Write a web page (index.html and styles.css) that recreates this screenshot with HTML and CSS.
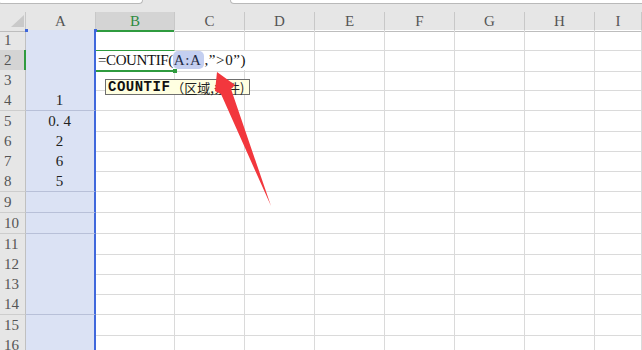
FILE: index.html
```html
<!DOCTYPE html>
<html>
<head>
<meta charset="utf-8">
<link rel="stylesheet" href="styles.css">
</head>
<body>
<div class="page">
  <div class="top">
    <div class="fbox fbox-name"></div>
    <div class="fbox fbox-formula"></div>
  </div>
  <div class="sheet">
    <div class="row hrow">
      <div class="corner"><span class="tri"></span></div>
      <div class="ch">A</div><div class="ch ch-sel">B</div><div class="ch">C</div><div class="ch">D</div><div class="ch">E</div><div class="ch">F</div><div class="ch">G</div><div class="ch">H</div><div class="ch">I</div>
    </div>
    <div class="row"><div class="rh">1</div><div class="c ca"></div><div class="c cb1"></div><div class="c"></div><div class="c"></div><div class="c"></div><div class="c"></div><div class="c"></div><div class="c"></div><div class="c"></div></div>
    <div class="row"><div class="rh rh-sel">2</div><div class="c ca"></div><div class="c cb2 nor"><span class="formula">=COUNTIF(<span class="hl">A:A</span><span class="tail">,”&gt;0”)</span></span></div><div class="c nor"></div><div class="c"></div><div class="c"></div><div class="c"></div><div class="c"></div><div class="c"></div><div class="c"></div></div>
    <div class="row"><div class="rh">3</div><div class="c ca"></div><div class="c"></div><div class="c"></div><div class="c"></div><div class="c"></div><div class="c"></div><div class="c"></div><div class="c"></div><div class="c"></div></div>
    <div class="row tall"><div class="rh">4</div><div class="c ca">1</div><div class="c"></div><div class="c"></div><div class="c"></div><div class="c"></div><div class="c"></div><div class="c"></div><div class="c"></div><div class="c"></div></div>
    <div class="row"><div class="rh">5</div><div class="c ca">0.<span class="gap"></span>4</div><div class="c"></div><div class="c"></div><div class="c"></div><div class="c"></div><div class="c"></div><div class="c"></div><div class="c"></div><div class="c"></div></div>
    <div class="row"><div class="rh">6</div><div class="c ca">2</div><div class="c"></div><div class="c"></div><div class="c"></div><div class="c"></div><div class="c"></div><div class="c"></div><div class="c"></div><div class="c"></div></div>
    <div class="row"><div class="rh">7</div><div class="c ca">6</div><div class="c"></div><div class="c"></div><div class="c"></div><div class="c"></div><div class="c"></div><div class="c"></div><div class="c"></div><div class="c"></div></div>
    <div class="row tall"><div class="rh">8</div><div class="c ca">5</div><div class="c"></div><div class="c"></div><div class="c"></div><div class="c"></div><div class="c"></div><div class="c"></div><div class="c"></div><div class="c"></div></div>
    <div class="row tall"><div class="rh">9</div><div class="c ca"></div><div class="c"></div><div class="c"></div><div class="c"></div><div class="c"></div><div class="c"></div><div class="c"></div><div class="c"></div><div class="c"></div></div>
    <div class="row tall"><div class="rh">10</div><div class="c ca"></div><div class="c"></div><div class="c"></div><div class="c"></div><div class="c"></div><div class="c"></div><div class="c"></div><div class="c"></div><div class="c"></div></div>
    <div class="row"><div class="rh">11</div><div class="c ca"></div><div class="c"></div><div class="c"></div><div class="c"></div><div class="c"></div><div class="c"></div><div class="c"></div><div class="c"></div><div class="c"></div></div>
    <div class="row"><div class="rh">12</div><div class="c ca"></div><div class="c"></div><div class="c"></div><div class="c"></div><div class="c"></div><div class="c"></div><div class="c"></div><div class="c"></div><div class="c"></div></div>
    <div class="row"><div class="rh">13</div><div class="c ca"></div><div class="c"></div><div class="c"></div><div class="c"></div><div class="c"></div><div class="c"></div><div class="c"></div><div class="c"></div><div class="c"></div></div>
    <div class="row tall"><div class="rh">14</div><div class="c ca"></div><div class="c"></div><div class="c"></div><div class="c"></div><div class="c"></div><div class="c"></div><div class="c"></div><div class="c"></div><div class="c"></div></div>
    <div class="row"><div class="rh">15</div><div class="c ca"></div><div class="c"></div><div class="c"></div><div class="c"></div><div class="c"></div><div class="c"></div><div class="c"></div><div class="c"></div><div class="c"></div></div>
    <div class="row"><div class="rh">16</div><div class="c ca"></div><div class="c"></div><div class="c"></div><div class="c"></div><div class="c"></div><div class="c"></div><div class="c"></div><div class="c"></div><div class="c"></div></div>
  </div>

  <span class="handle handle-a1"></span>
  <span class="handle handle-a2"></span>
  <span class="fill-handle"></span>

  <div class="tooltip"><b class="tt-fn">COUNTIF</b><span class="tt-args">（区域,条件)</span></div>

  <svg class="arrow" width="642" height="350" viewBox="0 0 642 350">
    <polygon points="217,72 235,85 231,89 271,206 221,94 215,91" fill="#f2373d"/>
  </svg>
</div>
</body>
</html>
```

FILE: styles.css
```css
* { box-sizing: border-box; }
html, body { margin: 0; padding: 0; }
body {
  width: 642px;
  height: 350px;
  overflow: hidden;
  background: #ffffff;
  font-family: "Liberation Serif", "Noto Sans CJK SC", serif;
}
.page {
  position: relative;
  width: 642px;
  height: 350px;
  overflow: hidden;
}
.top {
  height: 12px;
  background: #e6e6e6;
  display: flex;
  align-items: flex-start;
  gap: 87px;
}
.fbox {
  height: 4px;
  background: #ffffff;
  border: 1px solid #b9b9b9;
  border-top: none;
  border-radius: 0 0 5px 5px;
}
.fbox-name { width: 145px; margin-left: -2px; }
.fbox-formula { flex: 1; margin-right: -4px; }

.sheet { display: flex; flex-direction: column; }
.row {
  display: grid;
  grid-template-columns: 26px 70px 79px 70px 70px 70px 70px 70px 70px 1fr;
  height: 20px;
  flex: none;
}
.row.tall { height: 21px; }
.hrow {
  height: 18px;
  background: #e6e6e6;
}
.corner {
  position: relative;
  border-right: 1px solid #c8c8c8;
  border-bottom: 1px solid #bdbdbd;
}
.tri {
  position: absolute;
  right: 1px;
  bottom: 4px;
  width: 0;
  height: 0;
  border-left: 13px solid transparent;
  border-bottom: 12px solid #c9c9c9;
}
.ch {
  border-right: 1px solid #c8c8c8;
  border-bottom: 1px solid #bdbdbd;
  text-align: center;
  font-size: 15px;
  line-height: 18px;
  color: #555555;
}
.ch-sel {
  background: #d4d4d4;
  color: #2e8b3e;
  border-bottom: 2px solid #2f9b3f;
}
.rh {
  background: #e6e6e6;
  border-right: 1px solid #c0c0c0;
  border-bottom: 1px solid #cdcdcd;
  font-size: 15px;
  line-height: 20px;
  color: #555555;
  padding-left: 4px;
}
.rh-sel {
  background: #d4d4d4;
  border-right: 2px solid #2f9b3f;
}
.c {
  border-right: 1px solid #dadada;
  border-bottom: 1px solid #dadada;
  font-size: 15px;
  line-height: 20px;
  color: #222222;
  white-space: nowrap;
}
.ca {
  background: #dbe2f4;
  border-right: 2px solid #4068dc;
  border-bottom: 1px solid #b8c0d8;
  text-align: center;
  padding-right: 1px;
}
.gap { display: inline-block; width: 4px; }
.cb1 { border-bottom: 1px solid #2f9b3f; }
.cb2 { border-bottom: 2px solid #2f9b3f; position: relative; }
.nor { border-right-color: transparent; }
.formula {
  display: inline-block;
  padding-left: 2px;
  color: #111111;
  letter-spacing: -0.4px;
  line-height: 19px;
}
.hl {
  background: #c4cff0;
  border-radius: 5px;
  padding: 1px 2px 1px 1px;
  letter-spacing: 0.6px;
  color: #222a44;
}
.tail {
  letter-spacing: 0.6px;
  margin-left: 1px;
}

.handle {
  position: absolute;
  width: 3px;
  height: 3px;
  background: #3d66da;
}
.handle-a1 { left: 25px; top: 29px; }
.handle-a2 { left: 94px; top: 29px; }
.fill-handle {
  position: absolute;
  left: 173px;
  top: 69px;
  width: 4px;
  height: 4px;
  background: #2f9b3f;
}

.tooltip {
  position: absolute;
  left: 105px;
  top: 79px;
  width: 145px;
  height: 16px;
  padding: 0 0 0 2px;
  background: #ffffe1;
  border: 1px solid #6e6e6e;
  display: flex;
  align-items: center;
  white-space: nowrap;
  color: #111111;
}
.tt-fn {
  font-family: "Liberation Mono", monospace;
  font-size: 14px;
  font-weight: bold;
  letter-spacing: 0.5px;
}
.tt-args {
  font-family: "Noto Sans CJK SC", sans-serif;
  font-size: 13px;
  margin-left: 1px;
  color: #222222;
}

.arrow {
  position: absolute;
  left: 0;
  top: 0;
  pointer-events: none;
}
```
